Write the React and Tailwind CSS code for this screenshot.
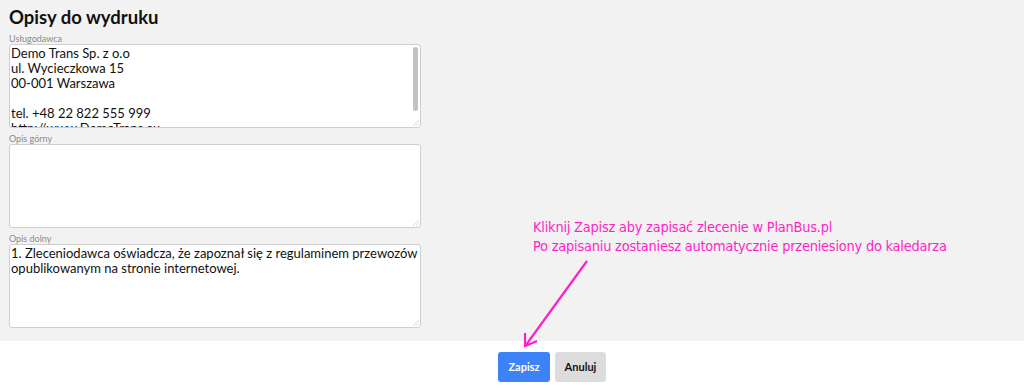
import React from "react";

const uslugodawca = `Demo Trans Sp. z o.o
ul. Wycieczkowa 15
00-001 Warszawa

tel. +48 22 822 555 999
http://www.DemoTrans.eu
mail: biuro@DemoTrans.eu`;

const opisDolny =
  "1. Zleceniodawca oświadcza, że zapoznał się z regulaminem przewozów opublikowanym na stronie internetowej.";

function Field({ label, value, mt, scroll }) {
  return (
    <div className={mt}>
      <label className="block text-[9px] leading-[11px] text-[#8a8a8a]">{label}</label>
      <div className="relative w-[412px]">
        <textarea
          defaultValue={value}
          className="block w-[412px] h-[84px] bg-white border border-[#cfcfcf] rounded-[3px] px-[1px] pt-[1px] pb-0 text-[13px] leading-[15px] text-[#111] resize-none outline-none overflow-hidden"
          style={{ fontFamily: "Lato, sans-serif" }}
        />
        {scroll && (
          <div className="absolute right-[3px] top-[3px] w-[5px] h-[64px] rounded-full bg-[#c2c2c2]" />
        )}
        <svg className="absolute right-[2px] bottom-[2px]" width="7" height="7">
          <line x1="1" y1="7" x2="7" y2="1" stroke="#dcdcdc" strokeWidth="1" />
          <line x1="4" y1="7" x2="7" y2="4" stroke="#dcdcdc" strokeWidth="1" />
        </svg>
      </div>
    </div>
  );
}

export default function App() {
  return (
    <div className="w-[1024px] h-[390px] bg-white" style={{ fontFamily: "Lato, sans-serif" }}>
      <div className="relative h-[341px] bg-[#f2f2f2] pl-[9px] pt-[6px]">
        <h1 className="text-[18.5px] leading-[22px] font-bold text-[#111]">Opisy do wydruku</h1>
        <Field label="Usługodawca" value={uslugodawca} mt="mt-[5px]" scroll />
        <Field label="Opis górny" value="" mt="mt-[5px]" />
        <Field label="Opis dolny" value={opisDolny} mt="mt-[5px]" />

        <div
          className="absolute left-[533px] top-[218px] text-[14.4px] leading-[19px] text-[#ff1fc8] tracking-[-0.2px]"
          style={{ fontFamily: "'DejaVu Sans Condensed', 'DejaVu Sans', sans-serif" }}
        >
          <div>Kliknij Zapisz aby zapisać zlecenie w PlanBus.pl</div>
          <div>Po zapisaniu zostaniesz automatycznie przeniesiony do kaledarza</div>
        </div>

        <svg className="absolute left-0 top-0 overflow-visible" width="1" height="1">
          <line x1="587" y1="261" x2="526" y2="345" stroke="#ff1fc8" strokeWidth="2.2" />
          <polyline points="525,333 525,346 537,341" fill="none" stroke="#ff1fc8" strokeWidth="2.2" />
        </svg>
      </div>

      <div className="flex justify-center gap-[5px] pt-[11px] pl-[80px]">
        <button className="w-[52px] h-[30px] rounded-[3px] bg-[#3d82f6] text-white text-[11px] font-bold">
          Zapisz
        </button>
        <button className="w-[51px] h-[30px] rounded-[3px] bg-[#dcdcdc] text-[#111] text-[11px] font-bold">
          Anuluj
        </button>
      </div>
    </div>
  );
}
